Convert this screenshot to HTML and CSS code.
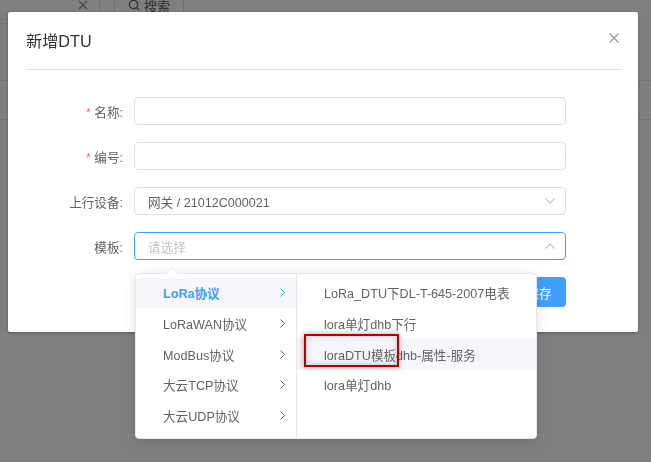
FILE: index.html
```html
<!DOCTYPE html>
<html lang="zh">
<head>
<meta charset="utf-8">
<title>新增DTU</title>
<link rel="stylesheet" href="styles.css">
</head>
<body>
<div class="page">
  <div class="toolbar">
    <div class="fake-input">
      <svg class="clear-ic" viewBox="0 0 10 10" width="10" height="10"><path d="M1 1 L9 9 M9 1 L1 9" stroke="#909399" stroke-width="1.2" fill="none"/></svg>
    </div>
    <div class="fake-btn">
      <svg viewBox="0 0 12 12" width="12" height="12"><circle cx="5.5" cy="5.5" r="4.2" stroke="#606266" stroke-width="1.2" fill="none"/><path d="M8.5 8.5 L11 11" stroke="#606266" stroke-width="1.2"/></svg>
      <span>搜索</span>
    </div>
  </div>
  <div class="band"></div>
  <div class="thead"></div>
</div>

<div class="overlay"></div>

<div class="dialog">
  <div class="dialog-header">
    <span class="dialog-title">新增DTU</span>
    <svg class="close-ic" viewBox="0 0 10 10" width="10" height="10"><path d="M0.5 0.5 L9.5 9.5 M9.5 0.5 L0.5 9.5" stroke="#909399" stroke-width="1.1" fill="none"/></svg>
  </div>
  <div class="divider"></div>
  <div class="dialog-body">
    <div class="form-row">
      <label class="form-label"><span class="req">*</span> 名称:</label>
      <div class="input"></div>
    </div>
    <div class="form-row">
      <label class="form-label"><span class="req">*</span> 编号:</label>
      <div class="input"></div>
    </div>
    <div class="form-row">
      <label class="form-label">上行设备:</label>
      <div class="input select">
        <span class="value">网关 / 21012C000021</span>
        <svg class="sel-arrow" viewBox="0 0 10 6" width="10" height="6"><path d="M0.5 0.5 L5 5 L9.5 0.5" stroke="#c0c4cc" stroke-width="1.1" fill="none"/></svg>
      </div>
    </div>
    <div class="form-row">
      <label class="form-label">模板:</label>
      <div class="input select focus">
        <span class="placeholder">请选择</span>
        <svg class="sel-arrow" viewBox="0 0 10 6" width="10" height="6"><path d="M0.5 5.5 L5 1 L9.5 5.5" stroke="#c0c4cc" stroke-width="1.1" fill="none"/></svg>
      </div>
    </div>
    <div class="dialog-footer">
      <div class="btn">取消</div>
      <div class="btn primary">保存</div>
    </div>
  </div>
</div>

<div class="popper">
  <div class="menu menu-first">
    <div class="node active"><span>LoRa协议</span><svg class="node-arrow" viewBox="0 0 5 9" width="5" height="9"><path d="M0.5 0.5 L4.5 4.5 L0.5 8.5" stroke="currentColor" stroke-width="1" fill="none"/></svg></div>
    <div class="node"><span>LoRaWAN协议</span><svg class="node-arrow" viewBox="0 0 5 9" width="5" height="9"><path d="M0.5 0.5 L4.5 4.5 L0.5 8.5" stroke="currentColor" stroke-width="1" fill="none"/></svg></div>
    <div class="node"><span>ModBus协议</span><svg class="node-arrow" viewBox="0 0 5 9" width="5" height="9"><path d="M0.5 0.5 L4.5 4.5 L0.5 8.5" stroke="currentColor" stroke-width="1" fill="none"/></svg></div>
    <div class="node"><span>大云TCP协议</span><svg class="node-arrow" viewBox="0 0 5 9" width="5" height="9"><path d="M0.5 0.5 L4.5 4.5 L0.5 8.5" stroke="currentColor" stroke-width="1" fill="none"/></svg></div>
    <div class="node"><span>大云UDP协议</span><svg class="node-arrow" viewBox="0 0 5 9" width="5" height="9"><path d="M0.5 0.5 L4.5 4.5 L0.5 8.5" stroke="currentColor" stroke-width="1" fill="none"/></svg></div>
  </div>
  <div class="menu menu-second">
    <div class="node"><span>LoRa_DTU下DL-T-645-2007电表</span></div>
    <div class="node"><span>lora单灯dhb下行</span></div>
    <div class="node hover"><span>loraDTU模板dhb-属性-服务</span></div>
    <div class="node"><span>lora单灯dhb</span></div>
  </div>
</div>

<div class="mark"></div>
</body>
</html>
```

FILE: styles.css
```css
* { box-sizing: border-box; }

html, body {
  margin: 0;
  padding: 0;
  width: 651px;
  height: 462px;
  overflow: hidden;
  background: #ffffff;
  font-family: "Liberation Sans", "Noto Sans CJK SC", sans-serif;
  font-size: 12.6px;
  color: #606266;
}

/* background page */
.page {
  width: 651px;
  height: 462px;
}
.toolbar {
  display: flex;
  align-items: flex-start;
  gap: 14px;
  height: 24px;
  width: 320px;
  border-bottom: 1px solid #e4e7ed;
}
.fake-input {
  margin-top: -10px;
  margin-left: -60px;
  width: 160px;
  height: 30px;
  border: 1px solid #dcdfe6;
  border-radius: 4px;
  display: flex;
  align-items: center;
  justify-content: flex-end;
  padding-right: 11px;
}
.fake-btn {
  margin-top: -10px;
  width: 70px;
  height: 30px;
  border: 1px solid #dcdfe6;
  border-radius: 4px;
  display: flex;
  align-items: center;
  gap: 4px;
  padding-left: 13px;
  font-size: 13px;
  color: #606266;
}
.band {
  height: 56px;
}
.thead {
  height: 40px;
  border-top: 1px solid #e4e7ed;
  border-bottom: 1px solid #e4e7ed;
}

.overlay {
  position: fixed;
  inset: 0;
  background: rgba(0, 0, 0, 0.5);
}

/* dialog */
.dialog {
  position: absolute;
  left: 8px;
  top: 12px;
  width: 630px;
  height: 320px;
  background: #ffffff;
  border-radius: 2px;
  box-shadow: 0 1px 3px rgba(0, 0, 0, 0.3);
}
.dialog-header {
  position: relative;
  height: 57px;
  padding: 18px 0 0 18px;
}
.dialog-title {
  font-size: 16.2px;
  line-height: 22px;
  color: #303133;
}
.close-ic {
  position: absolute;
  right: 19px;
  top: 21px;
}
.divider {
  margin: 0 16px 0 18px;
  border-top: 1px solid #dcdfe6;
}
.dialog-body {
  padding: 27px 72px 0 18px;
  display: flex;
  flex-direction: column;
  gap: 17px;
}
.form-row {
  display: flex;
  align-items: center;
  height: 28px;
}
.form-label {
  width: 108px;
  padding-right: 11px;
  text-align: right;
  color: #606266;
  white-space: nowrap;
}
.req {
  color: #f56c6c;
}
.input {
  flex: 1;
  height: 28px;
  border: 1px solid #dcdfe6;
  border-radius: 4px;
  background: #ffffff;
  padding: 0 10px 0 13px;
  display: flex;
  align-items: center;
}
.input.focus {
  border-color: #409eff;
}
.value {
  flex: 1;
  color: #606266;
}
.placeholder {
  flex: 1;
  color: #c0c4cc;
}
.sel-arrow {
  flex: none;
}
.dialog-footer {
  display: flex;
  justify-content: flex-end;
  gap: 9px;
}
.btn {
  height: 30px;
  padding: 0 13.5px;
  border: 1px solid #dcdfe6;
  border-radius: 3.6px;
  display: flex;
  align-items: center;
  color: #606266;
  background: #ffffff;
}
.btn.primary {
  background: #409eff;
  border-color: #409eff;
  color: #ffffff;
}

/* cascader popper */
.popper {
  position: absolute;
  left: 135px;
  top: 273px;
  width: 402px;
  height: 166px;
  background: #ffffff;
  border: 1px solid #e4e7ed;
  border-radius: 4px;
  box-shadow: 0 2px 12px rgba(0, 0, 0, 0.12);
  display: flex;
}
.popper::before,
.popper::after {
  content: "";
  position: absolute;
  left: 30px;
  width: 0;
  height: 0;
  border-left: 6px solid transparent;
  border-right: 6px solid transparent;
}
.popper::before {
  top: -7px;
  border-bottom: 6px solid #e4e7ed;
}
.popper::after {
  top: -6px;
  border-bottom: 6px solid #ffffff;
}
.menu {
  padding-top: 3.6px;
  height: 100%;
}
.menu-first {
  width: 161px;
  border-right: 1px solid #e4e7ed;
}
.menu-second {
  flex: 1;
}
.node {
  height: 30.67px;
  display: flex;
  align-items: center;
  padding: 0 10px 0 27px;
  color: #606266;
  white-space: nowrap;
}
.node span {
  flex: 1;
}
.node-arrow {
  flex: none;
  margin-right: 1px;
}
.node.active {
  background: #f5f7fa;
  color: #409eff;
  font-weight: bold;
}
.node.hover {
  background: #f5f7fa;
}

/* annotation box */
.mark {
  position: absolute;
  left: 304px;
  top: 334px;
  width: 95px;
  height: 33px;
  border: 2px solid #b40000;
  box-shadow: 0 0 6px rgba(0, 0, 0, 0.35), inset 0 0 6px rgba(0, 0, 0, 0.25);
}
```
